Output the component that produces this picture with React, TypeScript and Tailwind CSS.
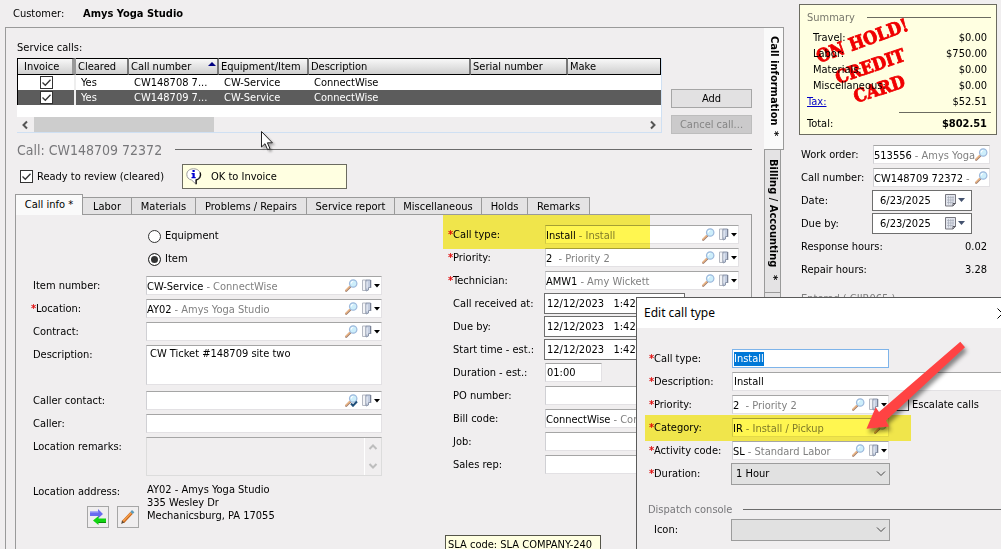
import type { ReactNode } from "react";

interface RowProps {
	id: string;
	label: string;
	required?: boolean;
	labelWidth: string;
	indent?: string;
	height?: string;
	children: ReactNode;
}

interface LookupProps {
	id: string;
	code?: string;
	text?: string;
	menu?: boolean;
	search?: boolean;
	checked?: boolean;
	width?: string;
}

const serviceCalls = [
	{ id: 1, number: "CW148708 7...", item: "CW-Service", description: "ConnectWise", selected: false },
	{ id: 2, number: "CW148709 7...", item: "CW-Service", description: "ConnectWise", selected: true },
];

const tabs = [
	{ name: "Labor", width: "w-[49px]" },
	{ name: "Materials", width: "w-[64px]" },
	{ name: "Problems / Repairs", width: "w-[111px]" },
	{ name: "Service report", width: "w-[88px]" },
	{ name: "Miscellaneous", width: "w-[87px]" },
	{ name: "Holds", width: "w-[46px]" },
	{ name: "Remarks", width: "w-[62px]" },
];

const charges = [
	{ name: "Travel:", amount: "$0.00" },
	{ name: "Labor:", amount: "$750.00" },
	{ name: "Materials:", amount: "$0.00" },
	{ name: "Miscellaneous:", amount: "$0.00" },
];

const fieldBox =
	"border border-[#e3e1e4] border-t-[#a5a5a5] border-l-[#d0d0d4] bg-white";

function SearchIcon({ checked = false }: { checked?: boolean }) {
	return (
		<svg width="13" height="13" viewBox="0 0 13 13" className="shrink-0">
			<path d="M1.200 11.800L5 8" stroke="#9c7a6c" strokeWidth="2.2" strokeLinecap="round" />
			<path d="M1 11.300L4.500 7.800" stroke="#ecb482" strokeWidth="1.400" strokeLinecap="round" />
			<circle cx="8.200" cy="4.500" r="3.700" fill="#cdeefb" stroke="#9db9dc" strokeWidth="1.200" />
			<path d="M6.200 4.500a2 2 0 0 1 2-2" stroke="#fff" strokeWidth="1.200" fill="none" />
			{checked && <path d="M6 9.500l2 2.200 4-4.200" stroke="#1f4e79" strokeWidth="2" fill="none" />}
		</svg>
	);
}

function DoorIcon() {
	return (
		<svg width="18" height="13" viewBox="0 0 18 13" className="shrink-0">
			<path d="M.5 1h3.500v10.500H.5z" fill="#f4f5f8" stroke="#b4b8c2" />
			<path d="M4 1h4.500v7.500H6.500V11L4 12z" fill="#c3cde0" stroke="#8c96aa" />
			<path d="M5 2.500v7" stroke="#f4f7fc" />
			<path d="M8.800 1v8" stroke="#6c7486" strokeWidth=".8" />
			<path d="M12 5h6l-3 3.500z" fill="#000" />
		</svg>
	);
}

function CalendarIcon() {
	return (
		<svg width="20" height="13" viewBox="0 0 20 13" className="shrink-0">
			<path d="M.5.5h10v9l-2.500 2.500h-7.500z" fill="#e3e6ee" stroke="#77777f" />
			<path d="M2 3.500h7M2 6h7M2 8.500h6M3.500 2v8.500M5.800 2v8.500M8 2v8" stroke="#a8adba" strokeWidth=".7" />
			<path d="M10.500 9.500h-2.500v2.500" fill="none" stroke="#55555c" />
			<path d="M13 4h7l-3.500 4z" fill="#44536f" />
		</svg>
	);
}

function Chevron({ className, path }: { className?: string; path: string }) {
	return (
		<svg width="10" height="10" viewBox="0 0 10 10" className={className}>
			<path d={path} fill="none" stroke="currentColor" strokeWidth="2" />
		</svg>
	);
}

function CheckBox({ id, defaultChecked = false }: { id: string; defaultChecked?: boolean }) {
	return (
		<span className="grid h-[13px] w-[13px] shrink-0">
			<input
				id={id}
				type="checkbox"
				defaultChecked={defaultChecked}
				className="peer col-start-1 row-start-1 h-[13px] w-[13px] appearance-none border border-[#333] bg-white"
			/>
			<svg
				viewBox="0 0 13 13"
				className="pointer-events-none invisible col-start-1 row-start-1 peer-checked:visible">
				<path d="M2.500 6.500l2.800 2.800 5.200-5.600" fill="none" stroke="#333" strokeWidth="1.300" />
			</svg>
		</span>
	);
}

function FormRow({ id, label, required, labelWidth, indent = "pl-[5px]", height = "h-[23px]", children }: RowProps) {
	return (
		<div className={`flex shrink-0 ${height}`}>
			<label
				htmlFor={id}
				className={`flex h-[23px] shrink-0 items-center whitespace-nowrap ${labelWidth} ${required ? "" : indent}`}>
				{required && <span className="w-[5px] font-bold text-[#e01010]">*</span>}
				{label}
			</label>
			<div className="flex min-w-0 flex-1 items-start pt-[2px]">{children}</div>
		</div>
	);
}

function Lookup({ id, code, text, menu = true, search = true, checked, width = "w-full" }: LookupProps) {
	return (
		<div className={`flex h-[19px] items-center overflow-hidden ${fieldBox} ${width}`}>
			<input
				id={id}
				defaultValue={code}
				className={`h-[15px] shrink-0 bg-transparent pt-[3px] outline-none ${
					code ? "field-sizing-content" : "w-[120px]"
				}`}
			/>
			<span className="min-w-0 flex-1 overflow-hidden pt-[3px] pl-[3px] whitespace-nowrap text-[#808080]">
				{text && `- ${text}`}
			</span>
			<div className="flex shrink-0 items-center gap-[4px] pr-px">
				{search && <SearchIcon checked={checked} />}
				{menu && <DoorIcon />}
			</div>
		</div>
	);
}

function DateTime({ id, value }: { id: string; value: string }) {
	return (
		<input
			id={id}
			defaultValue={value}
			className="-mt-px -ml-px h-[21px] w-[141px] border border-[#6e6e6e] bg-white px-[2px] whitespace-pre outline-none"
		/>
	);
}

function DateField({ id, value }: { id: string; value: string }) {
	return (
		<div className="-mt-px -ml-px flex h-[21px] w-[100px] items-center border border-[#6e6e6e] bg-white pr-[6px] pl-[7px]">
			<input id={id} defaultValue={value} className="min-w-0 flex-1 outline-none" />
			<button type="button" aria-label="Open calendar">
				<CalendarIcon />
			</button>
		</div>
	);
}

function ServiceCallTable() {
	const th =
		"h-[17px] border-y border-black border-r-2 border-r-[#777] bg-linear-to-b from-[#f8f8f8] to-[#cfcfcf] pl-[2px] text-left font-normal";
	return (
		<div className="flex h-[75px] min-w-0 flex-1 flex-col border-r border-b border-[#cfe0f3] bg-white">
			<table className="w-full table-fixed border-separate border-spacing-0 border-l border-black leading-[15px]">
				<colgroup>
					<col className="w-[58px]" />
					<col className="w-[53px]" />
					<col className="w-[90px]" />
					<col className="w-[90px]" />
					<col className="w-[162px]" />
					<col className="w-[97px]" />
					<col />
				</colgroup>
				<thead>
					<tr>
						<th className="h-[17px] border-y border-r-4 border-y-black border-r-[#999] bg-linear-to-b from-[#f8f8f8] to-[#cfcfcf] pl-[6px] text-left font-normal">
							Invoice
						</th>
						<th className={th}>Cleared</th>
						<th className={th}>
							<span className="flex items-center justify-between pr-px">
								Call number
								<svg width="8" height="4" viewBox="0 0 8 4" className="mb-[5px]">
									<path d="M0 4l4-4 4 4z" fill="#000080" />
								</svg>
							</span>
						</th>
						<th className={th}>Equipment/Item</th>
						<th className={th}>Description</th>
						<th className={th}>Serial number</th>
						<th className="h-[17px] border-y border-r border-black bg-linear-to-b from-[#f8f8f8] to-[#cfcfcf] pl-[2px] text-left font-normal">
							Make
						</th>
					</tr>
				</thead>
				<tbody>
					{serviceCalls.map((call) => (
						<tr
							key={call.id}
							className={call.selected ? "bg-[#5c5c5c] text-white" : "bg-white"}>
							<td className="h-[15px] border-r-2 border-[#eee] p-0">
								<span className="flex justify-center">
									<CheckBox id={`invoice-${call.id}`} defaultChecked />
								</span>
							</td>
							<td className="p-0 pl-[5px]">Yes</td>
							<td className="p-0 pl-[5px]">{call.number}</td>
							<td className="p-0 pl-[5px]">{call.item}</td>
							<td className="p-0 pl-[5px]">{call.description}</td>
							<td className="p-0" />
							<td className="p-0" />
						</tr>
					))}
				</tbody>
			</table>
			<div className="mt-auto flex h-[15px] items-center bg-[#f0eeef] text-[#555]">
				<Chevron className="mx-[3px]" path="M7 1.500L3.500 5L7 8.500" />
				<div className="ml-px h-[15px] w-[180px] bg-[#cdcdcd]" />
				<Chevron className="mr-[3px] ml-auto" path="M3 1.500L6.500 5L3 8.500" />
			</div>
		</div>
	);
}

function CallInfoPanel() {
	const left = { labelWidth: "w-[115px]", indent: "pl-[2px]" };
	const right = { labelWidth: "w-[97px]" };
	return (
		<div className="flex min-h-0 flex-1 gap-[66px] border border-b-0 border-[#9a9a9a] pt-[8px] pr-[12px] pl-[15px]">
			<div className="min-w-0 flex-[351]">
				<div className="mb-[5px] pl-[117px]">
					<label className="flex h-[23px] w-fit items-center gap-[4px] pt-[3px]">
						<input
							type="radio"
							name="target"
							className="h-[13px] w-[13px] appearance-none rounded-full border border-[#333] bg-white"
						/>
						Equipment
					</label>
					<label className="flex h-[23px] w-fit items-center gap-[4px] pt-[3px]">
						<input
							type="radio"
							name="target"
							defaultChecked
							className="h-[13px] w-[13px] appearance-none rounded-full border border-[#333] bg-white checked:bg-[#333] checked:shadow-[inset_0_0_0_2px_#fff]"
						/>
						Item
					</label>
				</div>
				<FormRow id="item" label="Item number:" {...left}>
					<Lookup id="item" code="CW-Service" text="ConnectWise" />
				</FormRow>
				<FormRow id="location" label="Location:" required {...left}>
					<Lookup id="location" code="AY02" text="Amys Yoga Studio" />
				</FormRow>
				<FormRow id="contract" label="Contract:" {...left}>
					<Lookup id="contract" />
				</FormRow>
				<FormRow id="description" label="Description:" height="h-[46px]" {...left}>
					<textarea
						id="description"
						defaultValue="CW Ticket #148709 site two"
						className={`h-[40px] w-full resize-none px-[3px] outline-none ${fieldBox}`}
					/>
				</FormRow>
				<FormRow id="contact" label="Caller contact:" {...left}>
					<Lookup id="contact" checked />
				</FormRow>
				<FormRow id="caller" label="Caller:" {...left}>
					<input id="caller" className={`h-[19px] w-full outline-none ${fieldBox}`} />
				</FormRow>
				<FormRow id="remarks" label="Location remarks:" height="h-[46px]" {...left}>
					<div className="flex h-[39px] w-full border border-[#dcdcdc] border-t-[#a5a5a5]">
						<textarea id="remarks" disabled className="min-w-0 flex-1 resize-none" />
						<div className="flex w-[17px] flex-col items-center justify-between border-l border-white py-[4px] text-[#bdbdbd]">
							<Chevron path="M1.500 7L5 3.500L8.500 7" />
							<Chevron path="M1.500 3L5 6.500L8.500 3" />
						</div>
					</div>
				</FormRow>
				<div className="flex leading-[13px]">
					<div className="w-[116px] shrink-0 pt-[4px] pl-[2px]">
						Location address:
						<div className="mt-[8px] flex justify-end gap-[8px] pr-[8px]">
							<button
								type="button"
								aria-label="Switch location"
								className="grid h-[22px] w-[22px] place-items-center border border-[#a6a6a6]">
								<svg width="18" height="18" viewBox="0 0 18 18">
									<path d="M1 3.500h8V1l5 5-5 4.500V8H1z" fill="#6a6af0" />
									<path d="M1 4h8.500" stroke="#a9a9fa" />
									<path d="M17 10.500H9.500V8l-5.500 4.500L9.500 17v-2H17z" fill="#12d412" />
									<path d="M17 14.500H9.500" stroke="#0a8a0a" />
								</svg>
							</button>
							<button
								type="button"
								aria-label="Edit location"
								className="grid h-[22px] w-[22px] place-items-center border border-[#a6a6a6]">
								<svg width="16" height="16" viewBox="0 0 16 16">
									<path d="M3 13L11.500 4" stroke="#c8661c" strokeWidth="3.200" />
									<path d="M3 12.500L11 4" stroke="#f5a04c" strokeWidth="1.400" />
									<path d="M11.500 4l1.700-1.900" stroke="#5c9ab8" strokeWidth="3.200" />
									<path d="M1.200 15l.8-3.500 2.300 2z" fill="#5a4632" />
								</svg>
							</button>
						</div>
					</div>
					<address className="pt-[2px] whitespace-nowrap not-italic">
						AY02 - Amys Yoga Studio
						<br />
						335 Wesley Dr
						<br />
						Mechanicsburg, PA 17055
					</address>
				</div>
			</div>

			<div className="min-w-0 flex-[291]">
				<FormRow id="call-type" label="Call type:" required {...right}>
					<Lookup id="call-type" code="Install" text="Install" />
				</FormRow>
				<FormRow id="priority" label="Priority:" required {...right}>
					<Lookup id="priority" code="2 " text="Priority 2" />
				</FormRow>
				<FormRow id="technician" label="Technician:" required {...right}>
					<Lookup id="technician" code="AMW1" text="Amy Wickett" />
				</FormRow>
				<FormRow id="received" label="Call received at:" {...right}>
					<DateTime id="received" value="12/12/2023   1:42" />
				</FormRow>
				<FormRow id="due" label="Due by:" {...right}>
					<DateTime id="due" value="12/12/2023   1:42" />
				</FormRow>
				<FormRow id="start" label="Start time - est.:" {...right}>
					<DateTime id="start" value="12/12/2023   1:42" />
				</FormRow>
				<FormRow id="duration" label="Duration - est.:" {...right}>
					<input
						id="duration"
						defaultValue="01:00"
						className={`h-[19px] w-[57px] px-px outline-none ${fieldBox}`}
					/>
				</FormRow>
				<FormRow id="po" label="PO number:" {...right}>
					<input id="po" className={`h-[19px] w-full outline-none ${fieldBox}`} />
				</FormRow>
				<FormRow id="bill" label="Bill code:" {...right}>
					<Lookup id="bill" code="ConnectWise" text="ConnectWise" />
				</FormRow>
				<FormRow id="job" label="Job:" {...right}>
					<Lookup id="job" />
				</FormRow>
				<FormRow id="rep" label="Sales rep:" {...right}>
					<Lookup id="rep" />
				</FormRow>
				<div className="mt-[59px] -ml-[3px] w-fit border border-[#55554a] bg-[#ffffe1] py-px pr-[8px] pl-[2px] whitespace-nowrap">
					SLA code: SLA COMPANY-240
				</div>
			</div>
		</div>
	);
}

function Summary() {
	return (
		<section className="relative h-[131px] border border-[#6b6b60] bg-[#ffffe1] pr-[5px] pl-[7px]">
			<svg className="absolute inset-0 h-full w-full" viewBox="0 0 196 129">
				<g
					fill="#f00000"
					stroke="#f00000"
					strokeWidth="0.8"
					className="font-['DejaVu_Serif_Condensed','DejaVu_Serif',serif] text-[18px] font-bold">
					<text transform="translate(19 58) rotate(-20)">ON HOLD!</text>
					<text transform="translate(38 79) rotate(-19)">CREDIT</text>
					<text transform="translate(56 98) rotate(-18)">CARD</text>
				</g>
			</svg>
			<div className="relative">
				<h2 className="flex h-[25px] items-center gap-[12px] text-[#77776c]">
					Summary
					<span className="h-px flex-1 bg-[#6b6b60]" />
				</h2>
				{charges.map((charge) => (
					<div key={charge.name} className="flex h-[16px] items-center justify-between pr-[4px] pl-[6px]">
						<span>{charge.name}</span>
						<span>{charge.amount}</span>
					</div>
				))}
				<div className="flex h-[16px] items-center justify-between pr-[4px]">
					<a href="#tax" className="text-[#0000c8] underline">
						Tax:
					</a>
					<span>$52.51</span>
				</div>
				<div className="mt-[2px] ml-auto h-px w-[92px] bg-[#6b6b60]" />
				<div className="flex h-[21px] items-center justify-between pr-[4px]">
					<span>Total:</span>
					<span className="font-bold">$802.51</span>
				</div>
			</div>
		</section>
	);
}

function Sidebar() {
	const row = { labelWidth: "w-[72px]", indent: "pl-0" };
	return (
		<aside className="w-[217px] shrink-0 pt-[4px] pr-[4px] pl-[15px]">
			<Summary />
			<div className="mt-[8px] pr-[7px] pl-[2px]">
				<FormRow id="work-order" label="Work order:" {...row}>
					<Lookup id="work-order" code="513556" text="Amys Yoga Studio" menu={false} />
				</FormRow>
				<FormRow id="call-number" label="Call number:" {...row}>
					<Lookup id="call-number" code="CW148709 72372" text=" " menu={false} />
				</FormRow>
				<FormRow id="date" label="Date:" {...row}>
					<DateField id="date" value="6/23/2025" />
				</FormRow>
				<FormRow id="due-date" label="Due by:" {...row}>
					<DateField id="due-date" value="6/23/2025" />
				</FormRow>
				<div className="flex h-[23px] items-center justify-between pr-[3px]">
					<span>Response hours:</span>
					<span>0.02</span>
				</div>
				<div className="flex h-[23px] items-center justify-between pr-[3px]">
					<span>Repair hours:</span>
					<span>3.28</span>
				</div>
				<div className="mt-[10px] text-[#808080]">Entered ( CJIR065 ):</div>
			</div>
		</aside>
	);
}

function EditCallTypeDialog() {
	const row = { labelWidth: "w-[83px]" };
	const select =
		"h-[22px] w-[159px] appearance-none border border-[#9c9c9c] bg-[#e1e1e1] px-[4px] outline-none";
	return (
		<div
			role="dialog"
			aria-label="Edit call type"
			className="absolute top-[297px] right-0 bottom-0 left-[636px] overflow-hidden border border-r-0 border-b-0 border-[#5a5a5a] bg-[#f0eeef]">
			<div className="flex h-[30px] items-center justify-between bg-white pl-[7px] font-['Noto_Sans',sans-serif] text-[12px]">
				Edit call type
				<button type="button" aria-label="Close" className="-mr-[7px]">
					<svg width="11" height="11" viewBox="0 0 11 11">
						<path d="M.5.5l10 10M10.500.5l-10 10" stroke="#000" />
					</svg>
				</button>
			</div>
			<div className="pt-[19px] pl-[12px]">
				<FormRow id="edit-type" label="Call type:" required {...row}>
					<div className="flex h-[19px] w-[157px] items-center border border-[#7eb4ea] bg-white px-px">
						<input
							id="edit-type"
							defaultValue="Install"
							className="h-[14px] bg-[#0078d7] text-white outline-none field-sizing-content"
						/>
					</div>
				</FormRow>
				<FormRow id="edit-description" label="Description:" required {...row}>
					<input
						id="edit-description"
						defaultValue="Install"
						className={`h-[19px] w-full border-r-0 px-px outline-none ${fieldBox}`}
					/>
				</FormRow>
				<FormRow id="edit-priority" label="Priority:" required {...row}>
					<Lookup id="edit-priority" code="2 " text="Priority 2" width="w-[157px]" />
					<label className="ml-[7px] flex h-[19px] items-center gap-[3px] whitespace-nowrap">
						<CheckBox id="escalate" />
						Escalate calls
					</label>
				</FormRow>
				<FormRow id="edit-category" label="Category:" required {...row}>
					<Lookup id="edit-category" code="IR" text="Install / Pickup" width="w-[157px]" menu={false} />
				</FormRow>
				<FormRow id="edit-activity" label="Activity code:" required {...row}>
					<Lookup id="edit-activity" code="SL" text="Standard Labor" width="w-[157px]" />
				</FormRow>
				<FormRow id="edit-duration" label="Duration:" required {...row}>
					<div className="-mt-px -ml-px grid items-center">
						<select id="edit-duration" className={`col-start-1 row-start-1 ${select}`}>
							<option>1 Hour</option>
						</select>
						<svg width="10" height="6" viewBox="0 0 10 6" className="pointer-events-none col-start-1 row-start-1 mr-[4px] justify-self-end">
							<path d="M1 .5l4 4 4-4" fill="none" stroke="#444" />
						</svg>
					</div>
				</FormRow>
			</div>
			<div className="mt-[13px] flex h-[23px] items-center gap-[11px] pl-[11px] text-[#77777a]">
				Dispatch console
				<span className="h-px flex-1 bg-[#6b6b6b]" />
			</div>
			<div className="-mt-[3px] pl-[12px]">
				<FormRow id="edit-icon" label="Icon:" {...row}>
					<div className="-mt-px -ml-px grid items-center">
						<select id="edit-icon" className={`col-start-1 row-start-1 ${select}`} />
						<svg width="10" height="6" viewBox="0 0 10 6" className="pointer-events-none col-start-1 row-start-1 mr-[4px] justify-self-end">
							<path d="M1 .5l4 4 4-4" fill="none" stroke="#444" />
						</svg>
					</div>
				</FormRow>
			</div>
		</div>
	);
}

// Highlighter marks, pointer arrow and mouse cursor drawn over the windows
function Annotations() {
	return (
		<>
			<div className="pointer-events-none absolute top-[415px] left-[645px] h-[26px] w-[266px] bg-[#fff650] mix-blend-multiply" />
			<svg
				className="pointer-events-none absolute top-[330px] left-[855px] drop-shadow-[2px_4px_2px_rgba(0,0,0,0.45)]"
				width="120"
				height="110"
				viewBox="855 330 120 110">
				<path
					d="M866.500 428.700L875.700 407.300L879 412L960.300 341.700L965 347.300L886 420.500L889 426.500z"
					fill="#ff4343"
				/>
			</svg>
			<svg
				className="pointer-events-none absolute top-[131px] left-[261px] drop-shadow-[2px_2px_1px_rgba(0,0,0,0.3)]"
				width="13"
				height="20"
				viewBox="0 0 13 20">
				<path
					d="M.5.5v15.500l3.500-3.300 2.600 6 2.400-1-2.600-5.900h5z"
					fill="#fff"
					stroke="#222"
				/>
			</svg>
		</>
	);
}

export default function App() {
	return (
		<div className="relative flex h-screen overflow-hidden bg-[#f0eeef] font-['DejaVu_Sans_Condensed','DejaVu_Sans',sans-serif] text-[11px] leading-[16px] text-black">
			<main className="flex min-w-0 flex-1 flex-col pl-[5px]">
				<header className="flex h-[27px] shrink-0 items-center pt-px pl-[8px]">
					<span className="w-[70px]">Customer:</span>
					<strong>Amys Yoga Studio</strong>
				</header>
				<div className="flex min-h-0 flex-1 border-l border-[#9a9a9a]">
					<div className="flex min-w-0 flex-1 flex-col border-t border-[#9a9a9a] pr-[12px] pl-[9px]">
						<div className="flex h-[30px] shrink-0 items-end pb-[2px] pl-[2px]">Service calls:</div>
						<div className="flex shrink-0 gap-[9px] pl-[2px]">
							<ServiceCallTable />
							<div className="flex w-[81px] flex-col gap-[7px] pt-[31px]">
								<button type="button" className="h-[19px] border border-[#a6a6a6] bg-[#e2e1e2]">
									Add
								</button>
								<button
									type="button"
									disabled
									className="h-[19px] border border-[#bdbdbd] bg-[#cbcacb] text-[#858585]">
									Cancel call...
								</button>
							</div>
						</div>
						<h1 className="flex h-[30px] shrink-0 items-center gap-[13px] pt-px pl-[2px] text-[14px] text-[#77777a]">
							Call: CW148709 72372
							<span className="h-px flex-1 bg-[#6b6b6b]" />
						</h1>
						<div className="flex h-[25px] shrink-0 items-center pl-[5px]">
							<label className="flex w-[162px] items-center gap-[4px] whitespace-nowrap">
								<CheckBox id="ready" defaultChecked />
								Ready to review (cleared)
							</label>
							<div className="flex h-[25px] w-[165px] items-center gap-[9px] border border-[#6b6b60] bg-[#ffffe1] pl-[3px]">
								<svg width="16" height="17" viewBox="0 0 16 17">
									<path
										d="M7.500.8c4 0 6.700 2.200 6.700 5.600 0 2.600-1.700 4.500-4.400 5.300v4.300l-4.200-4c-3-.5-4.800-2.700-4.800-5.600 0-3.400 2.700-5.600 6.700-5.600z"
										fill="#fff"
										stroke="#999"
									/>
									<path d="M14.200 4.500c1.500 4-1 6.800-4 7.500v4.200" fill="none" stroke="#111" strokeWidth="1.300" />
									<path d="M6.500 2h2.200v2h-2.200zM5.500 5h3.200v4h1v1.200h-4.200v-1.200h1v-2.800h-1z" fill="#0000d0" />
								</svg>
								OK to Invoice
							</div>
						</div>
						<div className="mt-[5px] -mb-px flex h-[21px] shrink-0 items-end" role="tablist">
							<button
								type="button"
								role="tab"
								className="z-10 h-[21px] w-[68px] border border-b-0 border-[#9a9a9a] bg-[#fafafa] pb-px">
								Call info *
							</button>
							{tabs.map((tab) => (
								<button
									key={tab.name}
									type="button"
									role="tab"
									className={`mb-px h-[17px] border border-b-0 border-l-0 border-[#9a9a9a] bg-[#e4e3e4] leading-[15px] whitespace-nowrap ${tab.width}`}>
									{tab.name}
								</button>
							))}
						</div>
						<CallInfoPanel />
					</div>
					<div className="flex w-[20px] shrink-0 flex-col items-start font-bold">
						<button
							type="button"
							className="flex h-[123px] w-[20px] shrink-0 items-center gap-[5px] border border-l-0 border-[#9a9a9a] bg-[#fafafa] pt-[8px] whitespace-nowrap [writing-mode:vertical-rl]">
							<span>Call information</span>
							<span>*</span>
						</button>
						<button
							type="button"
							className="flex h-[143px] w-[17px] shrink-0 items-center gap-[8px] border border-t-0 border-[#9a9a9a] bg-[#e4e3e4] pt-[9px] whitespace-nowrap [writing-mode:vertical-rl]">
							<span>Billing / Accounting</span>
							<span>*</span>
						</button>
						<div className="w-[17px] flex-1 border-x border-[#9a9a9a] bg-[#e4e3e4]" />
					</div>
				</div>
			</main>
			<Sidebar />
			<div className="pointer-events-none absolute top-[215px] left-[443px] h-[34px] w-[207px] bg-[#fff650] mix-blend-multiply" />
			<EditCallTypeDialog />
			<Annotations />
		</div>
	);
}
